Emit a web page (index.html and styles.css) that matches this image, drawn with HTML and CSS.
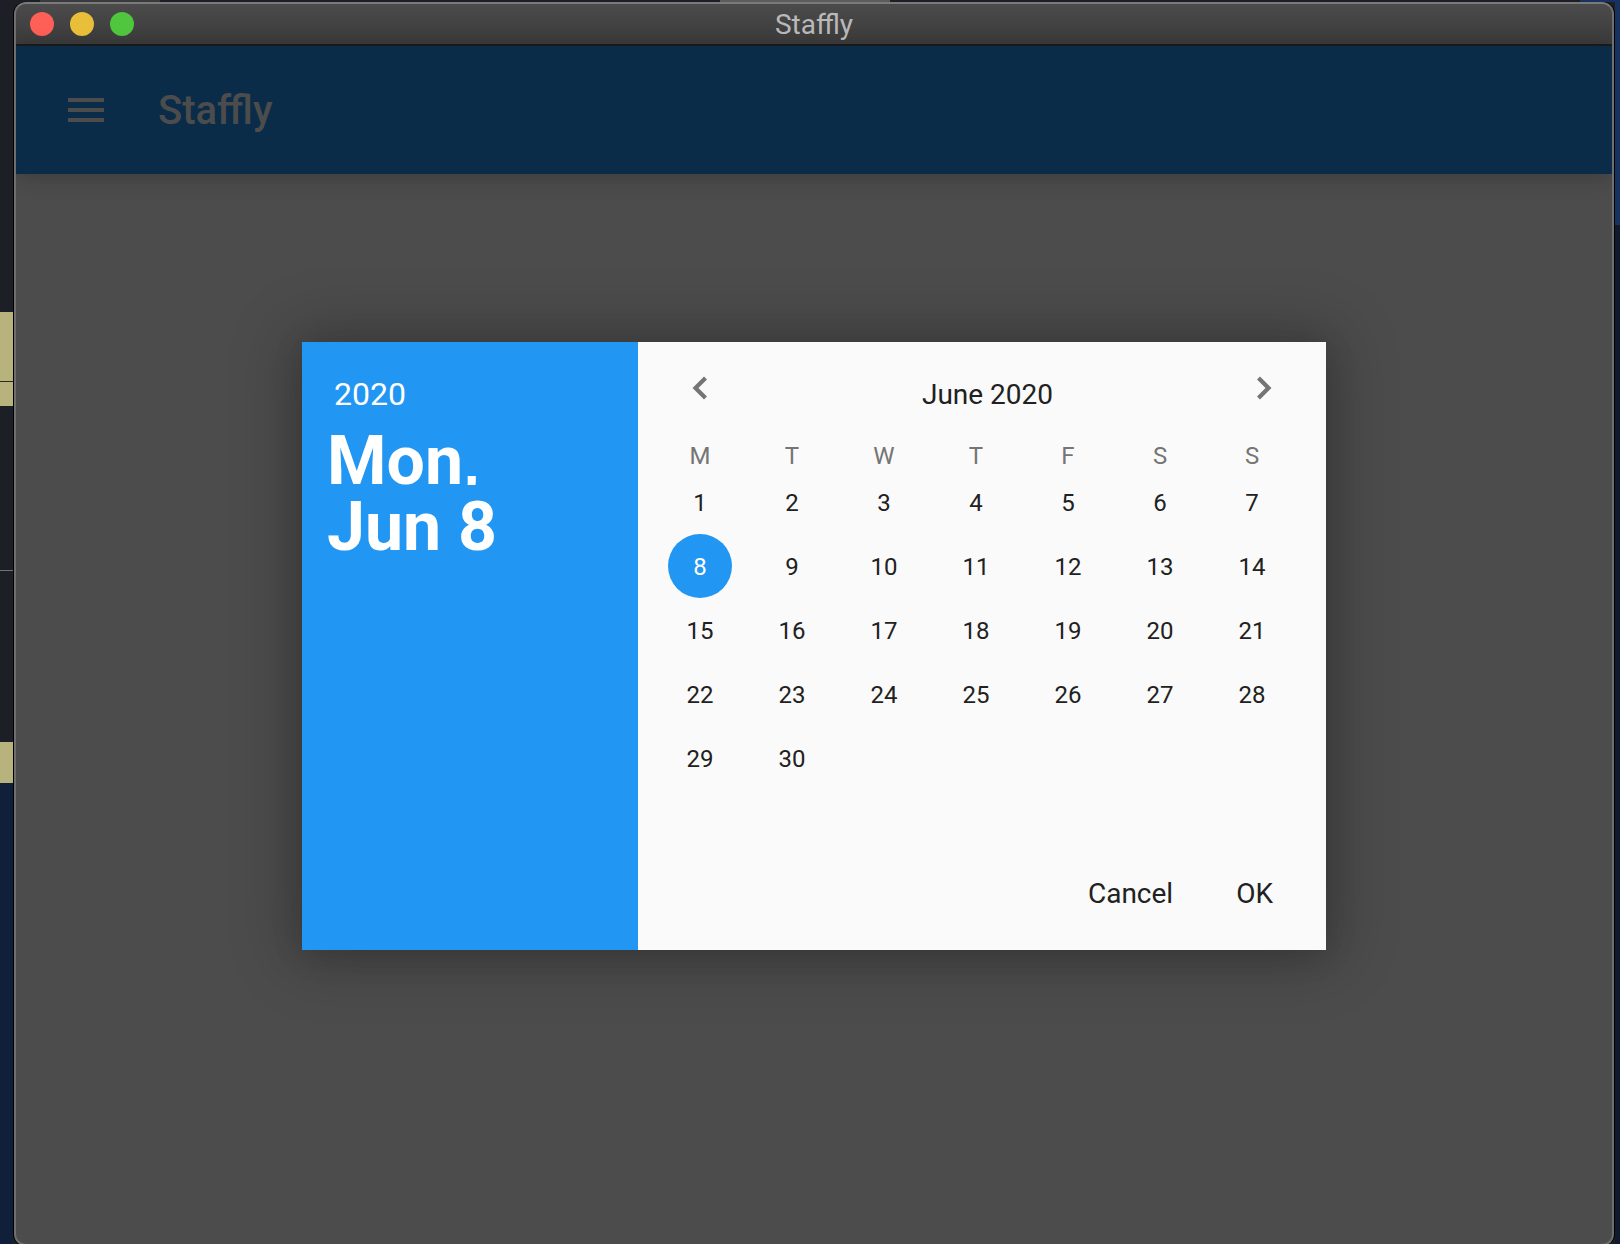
FILE: index.html
```html
<!DOCTYPE html>
<html lang="en">
<head>
<meta charset="utf-8">
<title>Staffly</title>
<link rel="stylesheet" href="styles.css">
</head>
<body>
<div class="desktop">
  <div class="window">
    <header class="titlebar">
      <div class="lights">
        <span class="light red"></span>
        <span class="light yellow"></span>
        <span class="light green"></span>
      </div>
      <div class="wintitle">Staffly</div>
    </header>
    <div class="app">
      <div class="appbar">
        <svg class="menu" width="36" height="24" viewBox="0 0 36 24"><path d="M0 0h36v4H0zM0 10h36v4H0zM0 20h36v4H0z" fill="#4c4c4c"/></svg>
        <div class="apptitle">Staffly</div>
      </div>
      <div class="content"></div>
      <div class="modal">
        <div class="dialog">
          <aside class="side">
            <div class="year">2020</div>
            <div class="bigdate"><span class="clipline">Mon,</span>Jun 8</div>
          </aside>
          <section class="cal">
            <div class="calhead">
              <svg class="chev" width="18" height="26" viewBox="0 0 18 26"><path d="M14.5 3l-10 10 10 10" fill="none" stroke="#757575" stroke-width="4.2"/></svg>
              <div class="month">June 2020</div>
              <svg class="chev" width="18" height="26" viewBox="0 0 18 26"><path d="M3.5 3l10 10-10 10" fill="none" stroke="#757575" stroke-width="4.2"/></svg>
            </div>
            <div class="dow">
              <span>M</span><span>T</span><span>W</span><span>T</span><span>F</span><span>S</span><span>S</span>
            </div>
            <div class="days">
              <span>1</span><span>2</span><span>3</span><span>4</span><span>5</span><span>6</span><span>7</span>
              <span class="sel">8</span><span>9</span><span>10</span><span>11</span><span>12</span><span>13</span><span>14</span>
              <span>15</span><span>16</span><span>17</span><span>18</span><span>19</span><span>20</span><span>21</span>
              <span>22</span><span>23</span><span>24</span><span>25</span><span>26</span><span>27</span><span>28</span>
              <span>29</span><span>30</span>
            </div>
            <div class="actions">
              <span class="btn">Cancel</span>
              <span class="btn">OK</span>
            </div>
          </section>
        </div>
      </div>
    </div>
  </div>
</div>
</body>
</html>
```
FILE: styles.css
```css
* { box-sizing: border-box; }
html, body { margin: 0; height: 100%; }
body { overflow: hidden; font-family: Roboto, "Liberation Sans", sans-serif; background: #1c1f26; }

.desktop {
  width: 1620px;
  height: 1244px;
  padding: 2px 6px 0 14px;
  overflow: hidden;
  background:
    linear-gradient(to right,
      transparent 0 40px, #3a3a3c 40px 160px, transparent 160px 720px,
      #5c5c5c 720px 890px, transparent 890px 1580px, #173260 1580px 100%) left top / 100% 2px no-repeat,
    linear-gradient(to bottom,
      #1c1f26 0 312px, #b8b37c 312px 381px, #2a2a20 381px 382px, #b8b37c 382px 406px,
      #1c1f26 406px 570px, #70727a 570px 571px, #1c1f26 571px 742px,
      #b8b37c 742px 783px, #10203a 783px 100%) left top / 13px 100% no-repeat,
    linear-gradient(to bottom, #173260 0 225px, #111a2c 225px 100%) right top / 5px 100% no-repeat,
    #1c1f26;
}

.window {
  height: 1244px;
  display: flex;
  flex-direction: column;
  border-radius: 12px;
  border: 2px solid #6f6f6f;
  border-top-color: #7a7a7a;
  box-shadow: -1px 0 0 #000, 1px 0 0 #000;
  overflow: hidden;
  background: #4c4c4c;
}

.titlebar {
  height: 42px;
  flex: none;
  display: flex;
  align-items: center;
  position: relative;
  background: linear-gradient(#4b4b4b, #3a3a3a);
  border-bottom: 2px solid #1b1b1b;
}
.lights { display: flex; gap: 16px; padding-left: 14px; }
.light { width: 24px; height: 24px; border-radius: 50%; }
.red { background: #fe5f57; }
.yellow { background: #e9bf3a; }
.green { background: #50c63e; }
.wintitle {
  position: absolute;
  left: 0; right: 0; top: 5px;
  text-align: center;
  font-size: 28px;
  line-height: 32px;
  color: #b9b9b9;
}

.app { flex: 1; position: relative; display: flex; flex-direction: column; }
.appbar {
  height: 128px;
  flex: none;
  display: flex;
  align-items: center;
  padding-left: 52px;
  background: #0a2c49;
  box-shadow: 0 4px 20px rgba(0,0,0,.2);
}
.apptitle { margin-left: 54px; font-size: 40px; font-weight: 500; color: #4c4c4c; }
.content { flex: 1; }

.modal {
  position: absolute;
  left: 0; right: 0; top: 0;
  height: 1200px;
  display: flex;
  align-items: center;
  justify-content: center;
}
.dialog {
  width: 1024px;
  height: 608px;
  display: flex;
  box-shadow: 0 0 60px 10px rgba(0,0,0,.24), 0 6px 30px rgba(0,0,0,.12);
}
.side {
  width: 336px;
  flex: none;
  background: #2196f3;
  color: #fff;
  padding: 34px 0 0 25px;
}
.year { font-size: 32px; line-height: 36px; padding-left: 7px; }
.bigdate { margin-top: 16px; font-size: 68px; line-height: 66px; font-weight: 700; }
.clipline { display: block; height: 57px; margin-bottom: 9px; overflow: hidden; }

.cal {
  flex: 1;
  background: #fafafa;
  display: flex;
  flex-direction: column;
  padding: 0 20px 0 16px;
  color: #212121;
}
.calhead {
  height: 80px;
  display: flex;
  align-items: flex-start;
  justify-content: space-between;
  padding: 33px 33px 0 37px;
  position: relative;
}
.month {
  position: absolute;
  left: 15px; right: 0; top: 37px;
  text-align: center;
  font-size: 28px;
  line-height: 32px;
}
.dow, .days {
  display: grid;
  grid-template-columns: repeat(7, 92px);
}
.dow { height: 33px; margin-top: 20px; }
.dow span { text-align: center; font-size: 24px; line-height: 28px; color: #757575; }
.days { grid-auto-rows: 64px; margin-top: -5px; }
.days span {
  display: flex;
  align-items: center;
  justify-content: center;
  padding-top: 2px;
  font-size: 24px;
  margin: 0 14px;
  border-radius: 50%;
}
.days .sel { background: #2196f3; color: #fff; }
.actions {
  margin-top: auto;
  height: 94px;
  display: flex;
  justify-content: flex-end;
  gap: 63px;
  padding-right: 33px;
}
.btn { font-size: 28px; line-height: 32px; padding-top: 22px; color: #212121; }
```
